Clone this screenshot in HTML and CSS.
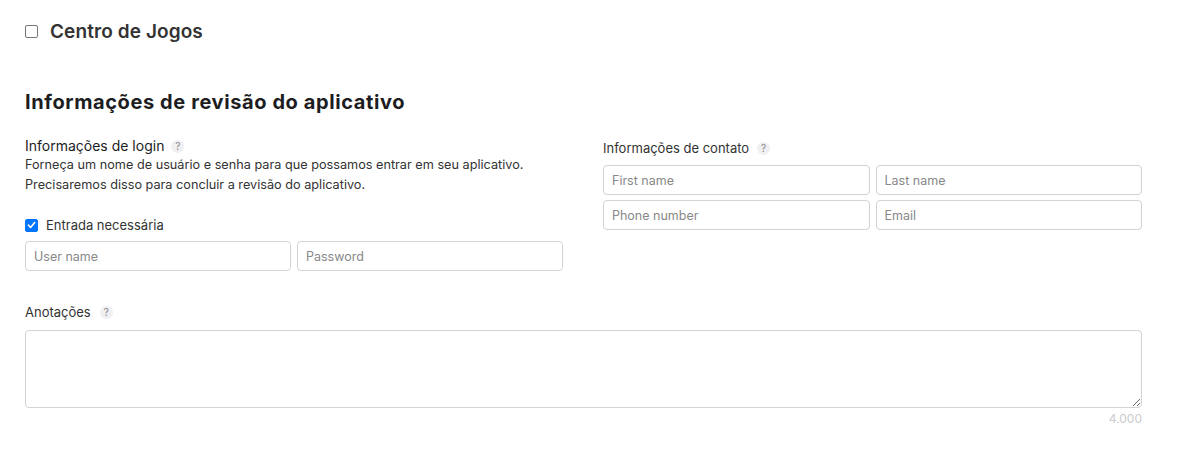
FILE: index.html
```html
<!DOCTYPE html>
<html lang="pt">
<head>
<meta charset="utf-8">
<link rel="stylesheet" href="styles.css">
</head>
<body>
<div class="page">
  <label class="game-center">
    <span class="cb"></span>
    <span class="gc-title">Centro de Jogos</span>
  </label>

  <h2 class="section-title">Informações de revisão do aplicativo</h2>

  <div class="columns">
    <div class="col">
      <div class="label-row login-label"><span class="label-strong">Informações de login</span><span class="help">?</span></div>
      <p class="desc">Forneça um nome de usuário e senha para que possamos entrar em seu aplicativo.<br>Precisaremos disso para concluir a revisão do aplicativo.</p>
      <label class="check-row"><span class="cb checked"><svg viewBox="0 0 12 12" width="12" height="12"><path d="M2.6 6.2 L5 8.7 L9.4 3.3" fill="none" stroke="#fff" stroke-width="1.8" stroke-linecap="round" stroke-linejoin="round"/></svg></span><span>Entrada necessária</span></label>
      <div class="field-grid login-fields">
        <input class="field" placeholder="User name">
        <input class="field" placeholder="Password">
      </div>
    </div>
    <div class="col">
      <div class="label-row contact-label"><span class="label">Informações de contato</span><span class="help">?</span></div>
      <div class="field-grid contact-fields">
        <input class="field" placeholder="First name">
        <input class="field" placeholder="Last name">
        <input class="field" placeholder="Phone number">
        <input class="field" placeholder="Email">
      </div>
    </div>
  </div>

  <div class="label-row notes-label"><span class="label">Anotações</span><span class="help">?</span></div>
  <textarea class="notes"></textarea>
  <div class="counter">4.000</div>
</div>
</body>
</html>
```

FILE: styles.css
```css
* { box-sizing: border-box; }
html, body { margin: 0; background: #fff; }
body {
  font-family: Inter, "Noto Sans", "Liberation Sans", sans-serif;
  color: #1d1d1f;
}
.page {
  width: 1142px;
  padding: 21px 0 0 25px;
}
.game-center {
  display: flex;
  align-items: center;
  gap: 12px;
  height: 20px;
}
.cb {
  width: 13px;
  height: 13px;
  border: 1px solid #767676;
  border-radius: 2px;
  background: #fff;
  display: inline-flex;
  align-items: center;
  justify-content: center;
  flex: none;
}
.cb.checked {
  background: #0075ff;
  border-color: #0075ff;
}
.gc-title {
  font-size: 19px;
  font-weight: 600;
  color: #333;
  letter-spacing: 0.1px;
}
.section-title {
  margin: 49px 0 0;
  font-size: 20px;
  font-weight: 700;
  line-height: 24px;
  letter-spacing: 0.6px;
  color: #1d1d1f;
}
.columns {
  display: grid;
  grid-template-columns: 538px 539px;
  column-gap: 40px;
  margin-top: 19px;
}
.label-row {
  display: flex;
  align-items: center;
  gap: 7px;
  line-height: 18px;
}
.label-strong { color: #1d1d1f; font-size: 14px; }
.label { color: #333; font-size: 13px; }
.help {
  width: 13px;
  height: 13px;
  border-radius: 50%;
  background: #f0f0f2;
  color: #888;
  font-size: 10px;
  line-height: 13px;
  text-align: center;
}
.login-label { margin-top: 4px; }
.contact-label { margin-top: 6px; gap: 8px; }
.desc {
  margin: 0;
  font-size: 12.7px;
  line-height: 20px;
  color: #333;
}
.check-row {
  display: flex;
  align-items: center;
  gap: 8px;
  margin-top: 21px;
  font-size: 13px;
  color: #333;
  height: 18px;
}
.field-grid {
  display: grid;
  grid-template-columns: 1fr 1fr;
  gap: 5px 6px;
}
.login-fields { margin-top: 7px; }
.contact-fields { margin-top: 8px; }
.field {
  height: 30px;
  border: 1px solid #d2d2d7;
  border-radius: 4px;
  padding: 0 8px;
  font-family: inherit;
  font-size: 12.5px;
  color: #1d1d1f;
  background: #fff;
  outline: none;
}
.field::placeholder { color: #888; }
.notes-label { margin-top: 32px; gap: 9px; }
.notes {
  display: block;
  width: 1117px;
  height: 78px;
  margin-top: 9px;
  border: 1px solid #d2d2d7;
  border-radius: 4px;
  font-family: inherit;
  outline: none;
}
.counter {
  width: 1117px;
  text-align: right;
  font-size: 12px;
  color: #ccc;
  margin-top: 3px;
}
```
